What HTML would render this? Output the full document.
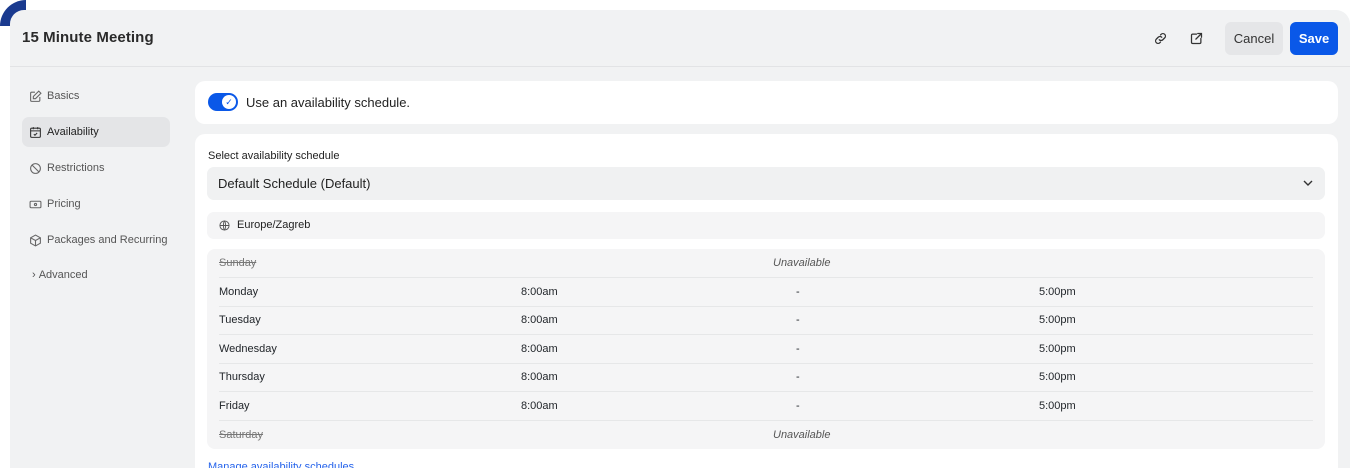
<!DOCTYPE html>
<html><head><style>
*{box-sizing:border-box;margin:0;padding:0}
html,body{width:1360px;height:468px;overflow:hidden}
body{background:#fff;font-family:"Liberation Sans",sans-serif;color:#1f2328;position:relative}
.corner{position:absolute;left:0;top:0;width:26px;height:26px;background:#1a3a8f;border-top-left-radius:26px}
.panel{position:absolute;left:10px;top:10px;width:1340px;height:480px;background:#f1f2f3;border-radius:14px}
.hdr{height:57px;border-bottom:1px solid #e2e3e5;position:relative}
.title{position:absolute;left:12px;top:19px;font-size:15px;font-weight:bold;color:#2a2a2a;letter-spacing:0.1px}
.btn{position:absolute;top:12px;height:33px;border-radius:6px;font-size:13px;line-height:33px;text-align:center}
.nav{position:absolute;left:12px;width:148px;height:30px;font-size:11px;color:#555;line-height:30px;padding-left:25px}
.nav svg{position:absolute;left:7px;top:9px}
.card{position:absolute;background:#fff;border-radius:10px}
.row{position:absolute;left:12px;right:12px;height:29px;font-size:11px;line-height:28px;border-bottom:1px solid #e6e7e8}
.row span{position:absolute}
</style></head><body>
<div class="corner"></div>
<div class="panel">
 <div class="hdr">
  <div class="title">15 Minute Meeting</div>
  <svg style="position:absolute;left:1143px;top:21px" width="15" height="15" viewBox="0 0 24 24" fill="none" stroke="#333" stroke-width="2" stroke-linecap="round"><path d="M10 14a4 4 0 0 0 5.7 0l3-3a4 4 0 0 0-5.7-5.7l-1 1"/><path d="M14 10a4 4 0 0 0-5.7 0l-3 3a4 4 0 0 0 5.7 5.7l1-1"/></svg>
  <svg style="position:absolute;left:1179px;top:21px" width="15" height="15" viewBox="0 0 24 24" fill="none" stroke="#333" stroke-width="2" stroke-linecap="round"><path d="M12 5H6a2 2 0 0 0-2 2v11a2 2 0 0 0 2 2h11a2 2 0 0 0 2-2v-6"/><path d="M14 4h6v6M20 4l-9 9"/></svg>
  <div class="btn" style="left:1215px;width:58px;background:#e5e6e8;color:#333">Cancel</div>
  <div class="btn" style="left:1280px;width:48px;background:#0a58e8;color:#fff;font-weight:bold">Save</div>
 </div>
 <div class="nav" style="top:71px"><svg width="13" height="13" viewBox="0 0 24 24" fill="none" stroke="#666" stroke-width="2"><path d="M11 4H5a2 2 0 0 0-2 2v13a2 2 0 0 0 2 2h13a2 2 0 0 0 2-2v-6"/><path d="M18 2l4 4-10 10H8v-4z"/></svg>Basics</div>
 <div class="nav" style="top:107px;background:#e4e5e7;border-radius:7px;color:#222"><svg width="13" height="13" viewBox="0 0 24 24" fill="none" stroke="#333" stroke-width="2"><rect x="3" y="4" width="18" height="17" rx="2"/><path d="M3 9h18M8 2v4M16 2v4M9 15l2 2 4-4"/></svg>Availability</div>
 <div class="nav" style="top:143px"><svg width="13" height="13" viewBox="0 0 24 24" fill="none" stroke="#666" stroke-width="2"><circle cx="12" cy="12" r="9"/><path d="M6 6l12 12"/></svg>Restrictions</div>
 <div class="nav" style="top:179px"><svg width="13" height="13" viewBox="0 0 24 24" fill="none" stroke="#666" stroke-width="2"><rect x="2" y="6" width="20" height="12" rx="2"/><circle cx="12" cy="12" r="2"/></svg>Pricing</div>
 <div class="nav" style="top:215px"><svg width="13" height="13" viewBox="0 0 24 24" fill="none" stroke="#666" stroke-width="2"><path d="M12 2l9 5v10l-9 5-9-5V7z"/><path d="M3 7l9 5 9-5M12 12v10"/></svg>Packages and Recurring</div>
 <div class="nav" style="top:250px;padding-left:10px">›&nbsp;Advanced</div>
 <div class="card" style="left:185px;top:71px;width:1143px;height:43px">
  <div style="position:absolute;left:13px;top:12px;width:30px;height:18px;border-radius:9px;background:#0a58e8"><div style="position:absolute;right:2px;top:2px;width:14px;height:14px;border-radius:7px;background:#fff;color:#0a58e8;font-size:9px;text-align:center;line-height:14px">✓</div></div>
  <div style="position:absolute;left:51px;top:14px;font-size:13px;color:#222">Use an availability schedule.</div>
 </div>
 <div class="card" style="left:185px;top:124px;width:1143px;height:360px">
  <div style="position:absolute;left:13px;top:16px;font-size:11px;color:#222">Select availability schedule</div>
  <div style="position:absolute;left:12px;top:33px;width:1118px;height:33px;background:#f0f1f2;border-radius:7px;font-size:13px;line-height:33px;padding-left:11px;color:#222">Default Schedule (Default)
   <svg style="position:absolute;right:12px;top:12px" width="10" height="8" viewBox="0 0 10 8" fill="none" stroke="#333" stroke-width="1.4"><path d="M1 2l4 4 4-4"/></svg></div>
  <div style="position:absolute;left:12px;top:78px;width:1118px;height:27px;background:#f5f5f6;border-radius:7px;font-size:11px;line-height:27px;padding-left:30px;color:#222">
   <svg style="position:absolute;left:12px;top:8px" width="11" height="11" viewBox="0 0 24 24" fill="none" stroke="#555" stroke-width="2"><circle cx="12" cy="12" r="10"/><path d="M2 12h20M12 2c3 3 3 17 0 20M12 2c-3 3-3 17 0 20"/></svg>Europe/Zagreb</div>
  <div style="position:absolute;left:12px;top:115px;width:1118px;height:200px;background:#f5f5f6;border-radius:8px">
   <div class="row" style="top:0"><span style="left:0;color:#777;text-decoration:line-through">Sunday</span><span style="left:554px;color:#555;font-style:italic">Unavailable</span></div>
   <div class="row" style="top:29px"><span style="left:0">Monday</span><span style="left:302px">8:00am</span><span style="left:577px">-</span><span style="left:820px">5:00pm</span></div>
   <div class="row" style="top:57px"><span style="left:0">Tuesday</span><span style="left:302px">8:00am</span><span style="left:577px">-</span><span style="left:820px">5:00pm</span></div>
   <div class="row" style="top:86px"><span style="left:0">Wednesday</span><span style="left:302px">8:00am</span><span style="left:577px">-</span><span style="left:820px">5:00pm</span></div>
   <div class="row" style="top:114px"><span style="left:0">Thursday</span><span style="left:302px">8:00am</span><span style="left:577px">-</span><span style="left:820px">5:00pm</span></div>
   <div class="row" style="top:143px"><span style="left:0">Friday</span><span style="left:302px">8:00am</span><span style="left:577px">-</span><span style="left:820px">5:00pm</span></div>
   <div class="row" style="top:172px;border:none"><span style="left:0;color:#777;text-decoration:line-through">Saturday</span><span style="left:554px;color:#555;font-style:italic">Unavailable</span></div>
  </div>
  <div style="position:absolute;left:13px;top:327px;font-size:11px;color:#2563eb">Manage availability schedules</div>
 </div>
</div>
</body></html>
